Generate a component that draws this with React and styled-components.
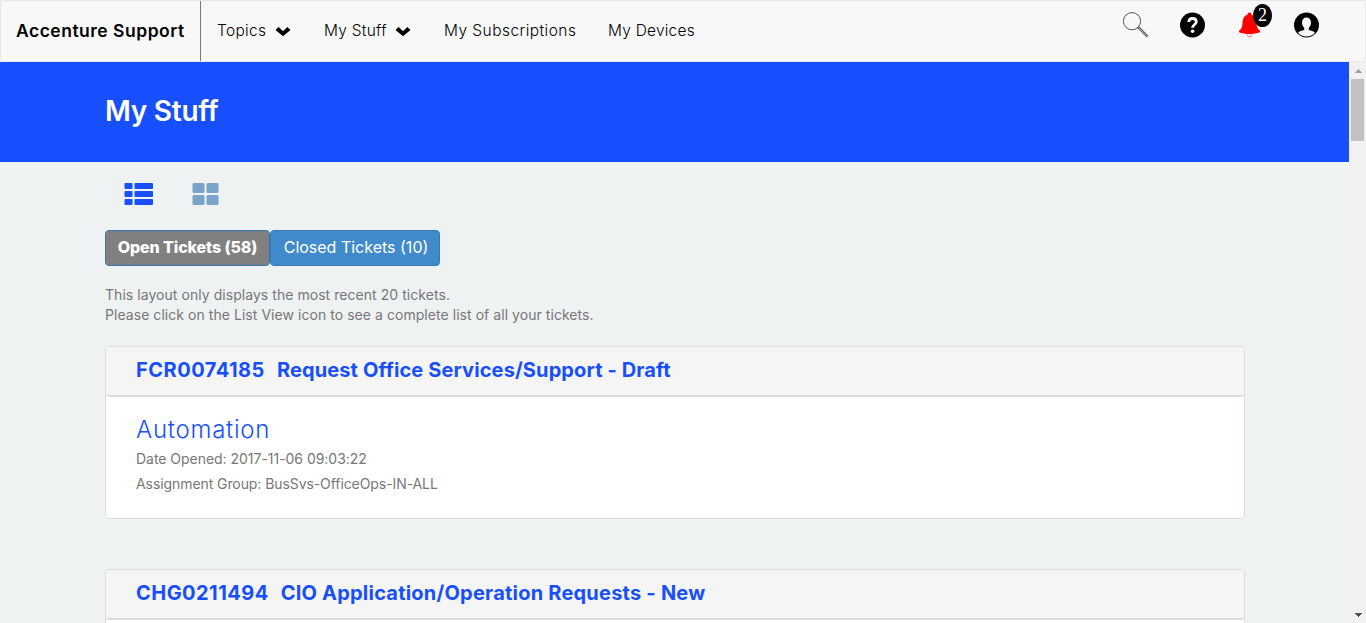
import React from 'react';
import styled, { createGlobalStyle } from 'styled-components';

const Global = createGlobalStyle`
  * { box-sizing: border-box; }
  html, body, #root { height: 100%; }
  body {
    margin: 0;
    overflow: hidden;
    font-family: Inter, "Liberation Sans", sans-serif;
    background: #eef2f3;
  }
`;

const Page = styled.div`
  height: 623px;
  display: flex;
  flex-direction: column;
  overflow: hidden;
`;

const Navbar = styled.header`
  flex: none;
  height: 62px;
  display: flex;
  background: #f8f8f8;
  border: 1px solid #e7e7e7;
  border-radius: 4px;
`;

const Brand = styled.div`
  width: 200px;
  padding-left: 15px;
  border-right: 1px solid #777;
  line-height: 60px;
`;

const NavLinks = styled.nav`
  display: flex;
  flex: 1;
  line-height: 60px;
`;

const NavItem = styled.a`
  width: ${(p) => p.$width}px;
  padding-left: 16px;
  display: flex;
  align-items: center;
  height: 60px;
`;

const LinkInner = styled.span`
  display: flex;
  align-items: center;
  width: ${(p) => (p.$width ? `${p.$width}px` : 'auto')};
`;

const Text = styled.span`
  font-size: ${(p) => p.$size}px;
  font-weight: ${(p) => p.$weight || 400};
  letter-spacing: ${(p) => p.$track || 0}px;
  color: ${(p) => p.$color || 'inherit'};
  white-space: pre;
`;

const Chevron = styled.svg`
  width: 16px;
  height: 11px;
  margin: 1px 0 0 auto;
`;

const NavIcons = styled.div`
  display: flex;
  gap: 32px;
  padding: 10px 46px 0 0;
`;

const IconButton = styled.span`
  position: relative;
  width: 25px;
  height: 28px;
  svg { display: block; }
`;

const Badge = styled.span`
  position: absolute;
  left: 16px;
  top: -7px;
  width: 19px;
  height: 23px;
  border-radius: 50%;
  background: #000;
  color: #fff;
  font: 18px/23px "Liberation Serif", serif;
  text-align: center;
`;

const Body = styled.div`
  flex: 1;
  min-height: 0;
  display: flex;
`;

const Scroller = styled.main`
  flex: 1;
  min-width: 0;
  overflow: hidden;
`;

const Banner = styled.div`
  height: 100px;
  padding: 0 105px;
  background: #174fff;
  color: #fff;
  line-height: 99px;
`;

const Content = styled.div`
  padding: 0 104px 0 105px;
`;

const ViewSwitch = styled.div`
  display: flex;
  gap: 39px;
  height: 68px;
  padding: 20px 0 0 19px;
`;

const Tabs = styled.div`
  display: flex;
`;

const Tab = styled.button`
  width: ${(p) => p.$width}px;
  height: 36px;
  padding: 0 0 2px ${(p) => (p.$active ? 0 : 2)}px;
  border: 1px solid #337ab7;
  border-radius: 4px;
  background: ${(p) => (p.$active ? '#808080' : '#428bca')};
  color: #fff;
  font-family: inherit;
`;

const Note = styled.p`
  margin: 19px 0 21px;
  color: #777;
  font-size: 14px;
  line-height: 20px;
`;

const Panel = styled.section`
  height: 173px;
  margin-bottom: 50px;
  background: #fff;
  border: 1px solid #ddd;
  border-radius: 4px;
`;

const PanelHead = styled.h3`
  margin: 0;
  height: 50px;
  padding-left: 30px;
  display: flex;
  gap: 12px;
  line-height: 46px;
  color: #174fff;
  background: #f5f5f5;
  border-bottom: 2px solid #ddd;
  border-radius: 3px;
`;

const PanelBody = styled.div`
  display: flex;
  flex-direction: column;
  padding: 19px 30px;
  line-height: 25px;
  color: #777;
`;

const PanelTitle = styled.div`
  height: 30px;
  line-height: 28px;
  color: #174fff;
`;

const Scrollbar = styled.div`
  width: 17px;
  display: flex;
  flex-direction: column;
  align-items: center;
  justify-content: space-between;
  background: #f1f1f1;
`;

const Thumb = styled.div`
  width: 13px;
  height: 62px;
  margin-bottom: auto;
  background: #c1c1c1;
`;

const Arrow = ({ down }) => (
  <svg width="17" height="17" viewBox="0 0 17 17" shapeRendering="crispEdges">
    <path d={down ? 'M5 7h8L9 11z' : 'M5 11h8L9 7z'} fill={down ? '#505050' : '#a3a3a3'} />
  </svg>
);

const Down = () => (
  <Chevron viewBox="0 0 16 11">
    <path d="M3.600 1L8 5.200 12.400 1 15.500 3.900 8 10.200.500 3.900z" fill="#000" />
  </Chevron>
);

const links = [
  { label: 'Topics', width: 107, menu: true, inner: 74, track: 0.3 },
  { label: 'My Stuff', width: 120, menu: true, inner: 87, track: 0.25 },
  { label: 'My Subscriptions', width: 164, track: 0.45 },
  { label: 'My Devices', width: 120, track: 0.22 },
];

const tickets = [
  {
    id: 'FCR0074185', name: 'Request Office Services/Support - Draft', idTrack: 0.5, track: 0.12,
    title: 'Automation', opened: 'Date Opened: 2017-11-06 09:03:22', group: 'Assignment Group: BusSvs-OfficeOps-IN-ALL',
  },
  { id: 'CHG0211494', name: 'CIO Application/Operation Requests - New', idTrack: 0.45, track: 0.22 },
];

export default function App() {
  return (
    <Page>
      <Global />
      <Navbar>
        <Brand><Text $size={17.5} $weight={600} $track={0.5}>Accenture Support</Text></Brand>
        <NavLinks>
          {links.map((l) => (
            <NavItem key={l.label} $width={l.width}>
              <LinkInner $width={l.inner}>
                <Text $size={15.5} $weight={300} $track={l.track}>{l.label}</Text>
                {l.menu && <Down />}
              </LinkInner>
            </NavItem>
          ))}
        </NavLinks>
        <NavIcons>
          <IconButton>
            <svg width="26" height="28" viewBox="0 0 26 28" fill="none">
              <circle cx="9" cy="10.200" r="8.600" stroke="#555" strokeWidth="1" />
              <path d="M15.200 16.200L24.600 25.600" stroke="#666" strokeWidth="2.600" />
              <path d="M15.800 16.800L24 25" stroke="#9fb4c0" strokeWidth="0.900" />
            </svg>
          </IconButton>
          <IconButton>
            <svg width="25" height="28" viewBox="0 0 25 28">
              <circle cx="12.500" cy="14" r="12.500" fill="#000" />
              <path d="M8.800 11C8.900 8.600 10.400 7.500 12.500 7.500c2.300 0 3.800 1.200 3.800 3.300 0 2.800-3.600 2.700-3.600 6" fill="none" stroke="#f8f8f8" strokeWidth="2.800" />
              <circle cx="12.600" cy="20.200" r="1.800" fill="#f8f8f8" />
            </svg>
          </IconButton>
          <IconButton>
            <svg width="25" height="28" viewBox="0 0 25 28">
              <path d="M12.500 1.500c1.400 0 2 .8 2 2.200 3.500 1 4.800 4 5 8.300.2 4 1 6 3.500 7.700v1.500c-3 1.200-6.500 1.800-10.500 1.800S5 22.400 2 21.200v-1.500C4.500 18 5.300 16 5.500 12c.2-4.300 1.500-7.300 5-8.300 0-1.400.6-2.200 2-2.200z" fill="#f00" />
              <path d="M10.300 23.500a2.200 2.200 0 0 0 4.400 0" fill="none" stroke="#f66" strokeWidth="0.900" />
            </svg>
            <Badge>2</Badge>
          </IconButton>
          <IconButton>
            <svg width="25" height="28" viewBox="0 0 25 28">
              <circle cx="12.500" cy="14" r="12.500" fill="#000" />
              <path d="M12.500 6.500c2.900 0 4.500 2 4.500 5 0 2.200-.8 4-2.200 5.200v2.300c2.500.6 4.700 1.300 6.200 2.700A11.500 11.500 0 0 1 4 21.700c1.500-1.400 3.700-2.100 6.200-2.700v-2.300C8.800 15.500 8 13.700 8 11.500c0-3 1.600-5 4.500-5z" fill="#f8f8f8" />
            </svg>
          </IconButton>
        </NavIcons>
      </Navbar>
      <Body>
        <Scroller>
          <Banner><Text $size={28} $weight={600} $track={-0.25}>My Stuff</Text></Banner>
          <Content>
            <ViewSwitch>
              <svg width="29" height="24" viewBox="0 0 29 24" fill="#174fff">
                {[1, 9, 17].map((y) => (
                  <g key={y}>
                    <rect x="0.500" y={y} width="8" height="6" rx="1" />
                    <rect x="10.500" y={y} width="18.500" height="6" rx="1" />
                  </g>
                ))}
              </svg>
              <svg width="27" height="24" viewBox="0 0 27 24" fill="#7ba2c8">
                {[1, 13].map((y) => (
                  <g key={y}>
                    <rect x="0.500" y={y} width="12" height="10" rx="1.500" />
                    <rect x="14.500" y={y} width="12" height="10" rx="1.500" />
                  </g>
                ))}
              </svg>
            </ViewSwitch>
            <Tabs>
              <Tab $width={165} $active><Text $size={16} $weight={800} $track={-0.1}>Open Tickets (58)</Text></Tab>
              <Tab $width={170}><Text $size={16}>Closed Tickets (10)</Text></Tab>
            </Tabs>
            <Note>
              <Text $size={14} $track={0.05}>This layout only displays the most recent 20 tickets.</Text><br />
              <Text $size={14} $track={0.05}>Please click on the List View icon to see a complete list of all your tickets.</Text>
            </Note>
            {tickets.map((t) => (
              <Panel key={t.id}>
                <PanelHead>
                  <Text $size={20} $weight={700} $track={t.idTrack}>{t.id}</Text>
                  <Text $size={20} $weight={700} $track={t.track}>{t.name}</Text>
                </PanelHead>
                {t.title && (
                  <PanelBody>
                    <PanelTitle><Text $size={24} $weight={300} $track={0.75}>{t.title}</Text></PanelTitle>
                    <Text $size={14} $track={-0.03}>{t.opened}</Text>
                    <Text $size={14} $track={-0.08}>{t.group}</Text>
                  </PanelBody>
                )}
              </Panel>
            ))}
          </Content>
        </Scroller>
        <Scrollbar>
          <Arrow />
          <Thumb />
          <Arrow down />
        </Scrollbar>
      </Body>
    </Page>
  );
}
